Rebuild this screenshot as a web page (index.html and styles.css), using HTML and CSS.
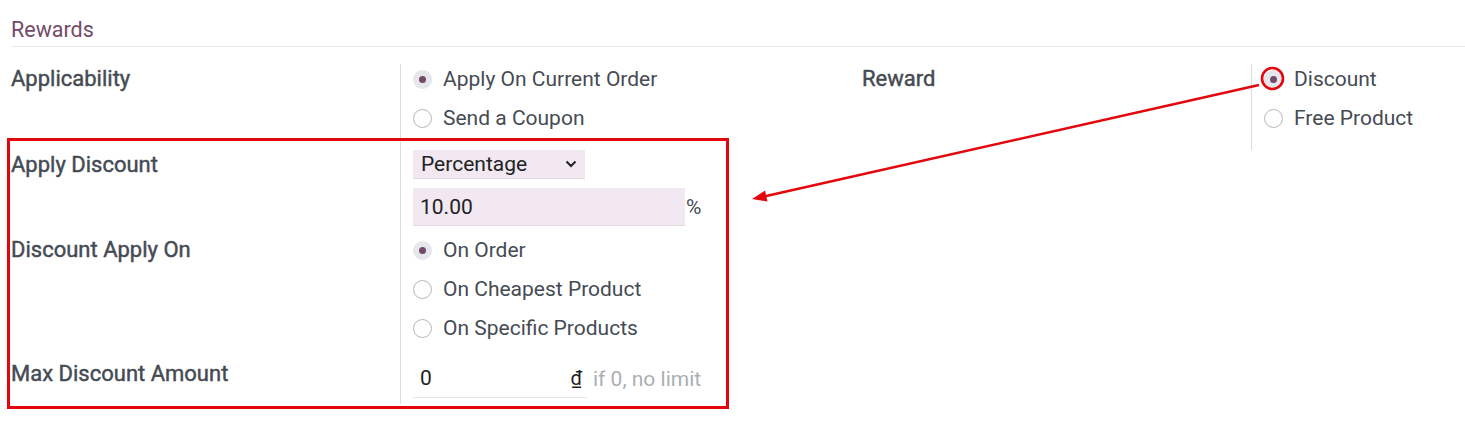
FILE: index.html
```html
<!DOCTYPE html>
<html lang="en">
<head>
<meta charset="utf-8">
<title>Rewards</title>
<link rel="stylesheet" href="styles.css">
</head>
<body>
<div class="sheet">
  <div class="section-title">Rewards</div>
  <div class="groups">
    <div class="group">
      <div class="row row-first">
        <div class="label">Applicability</div>
        <div class="value">
          <div class="radios">
            <div class="radio checked"><span class="dot"></span><span>Apply On Current Order</span></div>
            <div class="radio"><span class="dot"></span><span>Send a Coupon</span></div>
          </div>
        </div>
      </div>
      <div class="row row-discount">
        <div class="label">Apply Discount</div>
        <div class="value">
          <div class="select">
            <span>Percentage</span>
            <svg class="chev" width="12" height="8" viewBox="0 0 12 8"><path d="M1.5 1.5 L6 6 L10.5 1.5" fill="none" stroke="#222" stroke-width="2"/></svg>
          </div>
          <div class="amount">
            <div class="input filled">10.00</div>
            <span class="unit">%</span>
          </div>
        </div>
      </div>
      <div class="row row-apply">
        <div class="label">Discount Apply On</div>
        <div class="value">
          <div class="radios">
            <div class="radio checked"><span class="dot"></span><span>On Order</span></div>
            <div class="radio"><span class="dot"></span><span>On Cheapest Product</span></div>
            <div class="radio"><span class="dot"></span><span>On Specific Products</span></div>
          </div>
        </div>
      </div>
      <div class="row row-max">
        <div class="label">Max Discount Amount</div>
        <div class="value">
          <div class="max">
            <div class="input plain"><span>0</span><span class="currency">₫</span></div>
            <span class="hint">if 0, no limit</span>
          </div>
        </div>
      </div>
    </div>
    <div class="group">
      <div class="row row-first">
        <div class="label">Reward</div>
        <div class="value">
          <div class="radios">
            <div class="radio checked"><span class="dot"></span><span>Discount</span></div>
            <div class="radio"><span class="dot"></span><span>Free Product</span></div>
          </div>
        </div>
      </div>
    </div>
  </div>

  <div class="annot-box"></div>
  <svg class="annot-svg" width="1465" height="425" viewBox="0 0 1465 425">
    <circle cx="1272.5" cy="78.5" r="10.5" fill="none" stroke="#e3060d" stroke-width="2.6"/>
    <line x1="1259" y1="85" x2="764" y2="196.5" stroke="#e3060d" stroke-width="2.6"/>
    <path d="M752 199 L765 190.5 L767.5 201.5 Z" fill="#e3060d"/>
  </svg>
</div>
</body>
</html>
```

FILE: styles.css
```css
* { box-sizing: border-box; }

html, body {
  margin: 0;
  padding: 0;
  background: #ffffff;
}

body {
  font-family: Roboto, "Liberation Sans", Arial, sans-serif;
  font-size: 21px;
  color: #454b53;
}

.sheet {
  position: relative;
  width: 1465px;
  height: 425px;
  padding: 15px 0 0 11px;
}

.section-title {
  color: #714b67;
  font-size: 21.5px;
  line-height: 30px;
  height: 32px;
  border-bottom: 1px solid #ebebeb;
}

.groups {
  display: grid;
  grid-template-columns: 851px 1fr;
  margin-top: 17px;
}

.row {
  display: grid;
  grid-template-columns: 389px 1fr;
}

.label {
  font-size: 22px;
  font-weight: 400;
  letter-spacing: 0;
  -webkit-text-stroke: 0.45px #454b53;
  line-height: 30px;
  color: #454b53;
}

.value {
  border-left: 1px solid #dcdcdc;
  padding-left: 12px;
  line-height: 30px;
}

.row-first .label,
.row-first .value { padding-bottom: 17px; }

.row-discount .label,
.row-discount .value { padding-bottom: 9px; }

.row-apply .label,
.row-apply .value { padding-bottom: 16px; }

.row-max .label,
.row-max .value { padding-bottom: 6px; }

.radios {
  display: flex;
  flex-direction: column;
  gap: 9px;
}

.radio {
  display: flex;
  align-items: center;
  gap: 11px;
  height: 30px;
  color: #454b53;
}

.radio .dot {
  width: 19px;
  height: 19px;
  border-radius: 50%;
  border: 1px solid #b4b8bd;
  background: #ffffff;
  position: relative;
  flex: none;
}

.radio.checked .dot {
  background: #e6e6ec;
  border-color: #e6e6ec;
}

.radio.checked .dot::after {
  content: "";
  position: absolute;
  left: 50%;
  top: 50%;
  width: 7px;
  height: 7px;
  margin: -3.5px 0 0 -3.5px;
  border-radius: 50%;
  background: #714b67;
}

.select {
  margin-top: 0;
  width: 172px;
  height: 29px;
  background: #f1e8f2;
  border-bottom: 1px solid #e2dbe4;
  display: flex;
  align-items: center;
  justify-content: space-between;
  padding: 0 8px 0 8px;
  color: #222;
}

.chev { flex: none; }

.amount {
  display: flex;
  align-items: center;
  gap: 1px;
  margin-top: 9px;
}

.input.filled {
  width: 272px;
  height: 38px;
  background: #f1e8f2;
  border-bottom: 1px solid #e2dbe4;
  display: flex;
  align-items: center;
  padding-left: 7px;
  color: #222;
}

.unit {
  color: #454b53;
  font-size: 21px;
  margin-left: 0;
}

.max {
  display: flex;
  align-items: center;
  gap: 6px;
}

.input.plain {
  width: 174px;
  height: 39px;
  border-bottom: 1px solid #e4e4e4;
  display: flex;
  align-items: center;
  justify-content: space-between;
  padding: 0 5px 0 7px;
  color: #222;
}

.currency {
  color: #222;
  font-size: 20px;
}

.hint {
  color: #abafb4;
  padding-top: 0;
}

.annot-box {
  position: absolute;
  left: 7px;
  top: 138px;
  width: 722px;
  height: 271px;
  border: 3px solid #e3060d;
  pointer-events: none;
}

.annot-svg {
  position: absolute;
  left: 0;
  top: 0;
  pointer-events: none;
}
```
